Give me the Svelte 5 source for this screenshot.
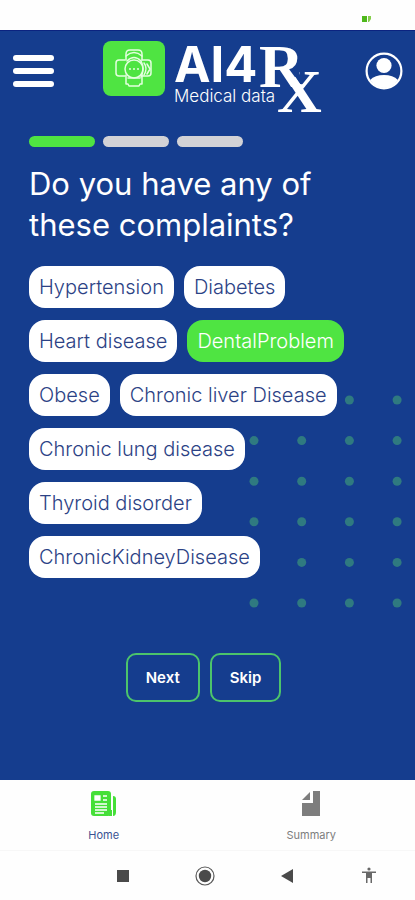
<script>
  const steps = 3;
  let step = $state(1);
  let tab = $state("home");

  let complaints = $state([
    { name: "Hypertension", selected: false },
    { name: "Diabetes", selected: false },
    { name: "Heart disease", selected: false },
    { name: "DentalProblem", selected: true },
    { name: "Obese", selected: false },
    { name: "Chronic liver Disease", selected: false },
    { name: "Chronic lung disease", selected: false },
    { name: "Thyroid disorder", selected: false },
    { name: "ChronicKidneyDisease", selected: false },
  ]);

  const dotCols = [0, 1, 2, 3];
  const dotRows = [0, 1, 2, 3, 4, 5];

  function advance() {
    if (step < steps) step++;
  }
</script>

<div class="app">
  <div class="status">
    <svg width="12" height="8" viewBox="0 0 12 8" aria-hidden="true">
      <rect x="1" y="1" width="5" height="6" fill="#4fb81c" />
      <path d="M7 1h3v3l-2 3H7z" fill="#86cf4c" />
    </svg>
  </div>

  <div class="screen">
    <header>
      <button class="icon-btn" aria-label="Menu">
        <svg width="42" height="34" viewBox="0 0 42 34" fill="#fff">
          <rect x="1" y="1" width="41" height="6" rx="3" />
          <rect x="1" y="14" width="41" height="6" rx="3" />
          <rect x="1" y="27" width="41" height="6" rx="3" />
        </svg>
      </button>

      <svg class="logo" width="214" height="76" viewBox="0 0 214 76">
        <defs>
          <!-- the R's leg stands in for the upper left arm of the X -->
          <clipPath id="x-arm">
            <path d="M196 20h30v60h-56V46h17l-2-6 11-6z" />
          </clipPath>
        </defs>
        <rect x="0" y="0" width="62" height="55" rx="8" fill="#4fe442" />
        <g fill="none" stroke="#e4ffdf" stroke-width="1.5" stroke-linejoin="round" stroke-linecap="round">
          <path d="M23 19v-6q0-4 4-4h8q4 0 4 4v6" />
          <path d="M23 15q8-7 16 0M24 20q7-7 14 0" />
          <path d="M22 19h-6q-3 0-3 3v10q0 3 3 3h6" />
          <path d="M39 19h6q3 0 3 3v10q0 3-3 3h-6" />
          <circle cx="31" cy="28" r="9" />
          <path d="M38 20q4 7 0 16M41 22q4 5 0 12M44 23l3 5-3 5" />
          <path d="M23 34v9h2l1 2h10l1-2h2v-9M25 37h12" />
        </g>
        <g fill="#e4ffdf">
          <circle cx="27" cy="28" r="1" />
          <circle cx="31" cy="28" r="1" />
          <circle cx="35" cy="28" r="1" />
        </g>
        <text class="logo-name" x="71" y="41">AI4</text>
        <text class="logo-rx" x="156" y="46">R</text>
        <g clip-path="url(#x-arm)">
          <text class="logo-rx" x="174" y="71">X</text>
        </g>
        <text class="logo-sub" x="71" y="61">Medical data</text>
      </svg>

      <button class="icon-btn" aria-label="Profile">
        <svg width="38" height="38" viewBox="0 0 38 38">
          <circle cx="19" cy="19" r="17.4" fill="none" stroke="#fff" stroke-width="2.2" />
          <circle cx="19" cy="13.500" r="7.600" fill="#fff" />
          <path d="M5 28q5-5 14-5t14 5q-5 8-14 8t-14-8z" fill="#fff" />
        </svg>
      </button>
    </header>

    <main>
      <div class="steps" role="progressbar" aria-label="Progress" aria-valuenow={step} aria-valuemin="1" aria-valuemax={steps}>
        {#each Array(steps) as _, i}
          <span class="step" class:done={i < step}></span>
        {/each}
      </div>

      <h1>Do you have any of these complaints?</h1>

      <div class="complaints">
        <svg class="dots" width="156" height="216" viewBox="0 0 156 216" aria-hidden="true">
          {#each dotRows as row}
            {#each dotCols as col}
              <circle cx={6 + col * 47.7} cy={6 + row * 40.6} r="4.5" fill="#2f7a80" />
            {/each}
          {/each}
        </svg>
        <div class="chips">
          {#each complaints as item}
            <button
              class="chip"
              class:selected={item.selected}
              aria-pressed={item.selected}
              onclick={() => (item.selected = !item.selected)}
            >
              {item.name}
            </button>
          {/each}
        </div>
      </div>

      <div class="actions">
        <button class="action" onclick={advance}>Next</button>
        <button class="action" onclick={advance}>Skip</button>
      </div>
    </main>
  </div>

  <nav class="tabs">
    <button class="tab" class:active={tab === "home"} onclick={() => (tab = "home")}>
      <svg width="26" height="26" viewBox="0 0 26 26">
        <rect x="0" y="0" width="20" height="25" rx="3" fill="#45df38" />
        <path d="M18 19h3v6h-3z" fill="#45df38" />
        <path d="M22 5q3 0 3 3v13q0 4-3 4z" fill="#45df38" />
        <path d="M4 5h5v4H4zM12 5h4M12 9h4M4 13h12M4 16h12M4 19h12M4 22h9" fill="#fff" stroke="#fff" stroke-width="1.3" />
      </svg>
      <span>Home</span>
    </button>
    <button class="tab" class:active={tab === "summary"} onclick={() => (tab = "summary")}>
      <svg width="26" height="26" viewBox="0 0 26 26" fill="#7d7d7d">
        <path d="M4 9l8-8v8z" />
        <path d="M4 12h11V0h7v25H4z" />
      </svg>
      <span>Summary</span>
    </button>
  </nav>

  <div class="system">
    <button aria-label="Recent apps">
      <svg width="20" height="20" viewBox="0 0 20 20">
        <rect x="4" y="4" width="12" height="12" fill="#4a4a4a" />
      </svg>
    </button>
    <button aria-label="Home screen">
      <svg width="20" height="20" viewBox="0 0 20 20">
        <circle cx="10" cy="10" r="9" fill="none" stroke="#5a5a5a" stroke-width="1.2" />
        <circle cx="10" cy="10" r="6.2" fill="#4a4a4a" />
      </svg>
    </button>
    <button aria-label="Back">
      <svg width="20" height="20" viewBox="0 0 20 20">
        <path d="M16 3v14L4 10z" fill="#4a4a4a" />
      </svg>
    </button>
    <button aria-label="Accessibility">
      <svg width="20" height="20" viewBox="0 0 20 20" fill="#686868">
        <circle cx="10" cy="3" r="1.6" />
        <path d="M3 5.5h14V7h-4v10h-1.500v-5h-3v5H7V7H3z" />
      </svg>
    </button>
  </div>
</div>

<style>
  :global(body) {
    margin: 0;
    background: #fefefe;
  }

  .app {
    display: flex;
    flex-direction: column;
    min-height: 100vh;
    font-family: Inter, "Open Sans", sans-serif;
  }

  button {
    margin: 0;
    padding: 0;
    border: none;
    background: none;
    font-family: inherit;
    cursor: pointer;
  }

  svg {
    display: block;
  }

  .status {
    display: flex;
    justify-content: flex-end;
    align-items: flex-end;
    box-sizing: border-box;
    height: 30px;
    padding: 0 42px 7px;
  }

  .screen {
    flex: 1;
    background: #153d8e;
    border-top: 1px solid #0b2380;
    box-sizing: border-box;
    color: #fff;
  }

  header {
    display: flex;
    justify-content: space-between;
    align-items: flex-start;
    padding: 10px 12px 0;
  }

  .icon-btn {
    display: flex;
    align-items: center;
    height: 60px;
  }

  .logo {
    fill: #fff;
    overflow: visible;
  }

  .logo-name {
    font-size: 49px;
    font-weight: 700;
  }

  .logo-sub {
    font-size: 17px;
    font-weight: 300;
  }

  .logo-rx {
    font-family: "Liberation Serif", serif;
    font-size: 62px;
    font-weight: 700;
  }

  main {
    padding: 19px 37px 78px 29px;
  }

  .steps {
    display: flex;
    gap: 8px;
  }

  .step {
    width: 66px;
    height: 11px;
    border-radius: 6px;
    background: #d2d2d6;
  }

  .step.done {
    background: #4fe442;
  }

  h1 {
    margin: 16px 0 21px;
    font-size: 31px;
    line-height: 41px;
    font-weight: 400;
  }

  .complaints {
    position: relative;
  }

  .dots {
    position: absolute;
    right: -26px;
    top: 128px;
  }

  .chips {
    position: relative;
    display: flex;
    flex-wrap: wrap;
    gap: 12px 10px;
  }

  .chip {
    height: 42px;
    padding: 0 10px;
    border-radius: 16px;
    background: #fff;
    color: #2c4285;
    font-size: 20px;
    font-weight: 300;
  }

  .chip.selected {
    background: #4fe442;
    color: #fff;
  }

  .actions {
    display: flex;
    justify-content: center;
    gap: 10px;
    margin-top: 75px;
  }

  .action {
    height: 49px;
    padding: 0 18px;
    border: 2px solid #4cc46b;
    border-radius: 10px;
    color: #fff;
    font-size: 15px;
    font-weight: 600;
  }

  .tabs {
    display: flex;
    height: 70px;
    border-bottom: 1px solid #f7f7f7;
  }

  .tab {
    flex: 1;
    display: flex;
    flex-direction: column;
    align-items: center;
    gap: 10px;
    padding-top: 11px;
    color: #7d7d7d;
    font-size: 11px;
    line-height: 16px;
  }

  .tab.active {
    color: #3a5292;
  }

  .system {
    display: flex;
    justify-content: flex-end;
    align-items: center;
    gap: 62px;
    height: 49px;
    padding-right: 36px;
  }
</style>
